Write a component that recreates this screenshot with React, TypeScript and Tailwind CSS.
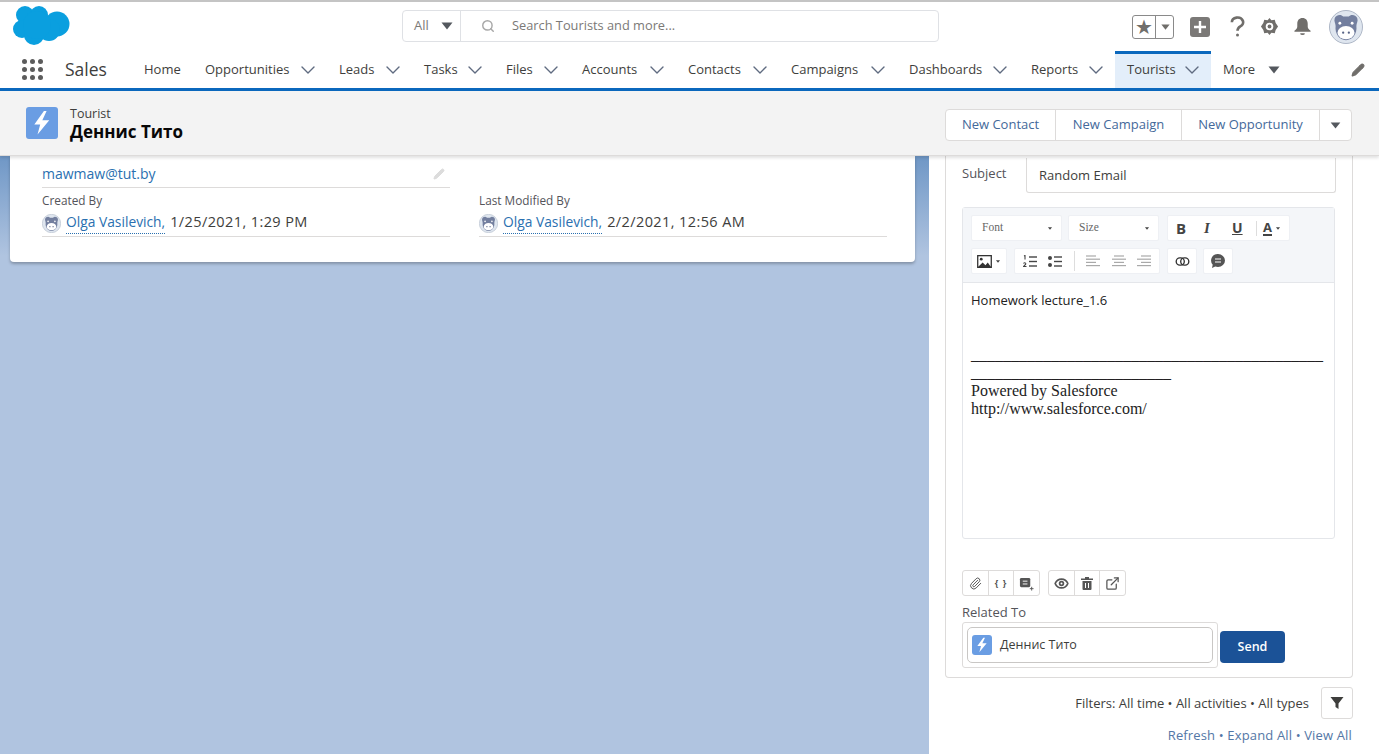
import React from "react";
import { ChevronDown, Pencil, Search, Paperclip, Eye, ExternalLink } from "lucide-react";

const Caret = ({ className = "" }: { className?: string }) => (
  <svg viewBox="0 0 12 8" className={className} fill="currentColor"><path d="M0.5 0.5h11L6 7.5z" /></svg>
);

const Bolt = ({ className = "" }: { className?: string }) => (
  <div className={`flex items-center justify-center rounded-[3px] bg-[#6a9de3] ${className}`}>
    <svg viewBox="0 0 24 24" className="h-[80%] w-[80%]" fill="#fff"><path d="M14 1 5 13.500h5.500L8 23l11-13.500h-6.500L16.500 1z" /></svg>
  </div>
);

const Astro = ({ size }: { size: number }) => (
  <svg viewBox="0 0 36 36" width={size} height={size}>
    <circle cx="18" cy="18" r="17.500" fill="#dfe6ef" stroke="#aab4c4" />
    <path d="M6 9c1-4 7-5 9-2h6c2-3 8-2 9 2 1 3-1 5-1 8 1 8-4 15-11 15S6 25 7 17c0-3-2-5-1-8z" fill="#737f9f" />
    <ellipse cx="18" cy="24" rx="9" ry="7" fill="#fff" />
    <circle cx="11.500" cy="14" r="1.500" fill="#fff" /><circle cx="24.500" cy="14" r="1.500" fill="#fff" />
    <circle cx="15" cy="24" r="1.200" fill="#566285" /><circle cx="21" cy="24" r="1.200" fill="#566285" />
  </svg>
);

const navItems: [string, number][] = [
  ["Opportunities", 134], ["Leads", 85], ["Tasks", 82], ["Files", 76], ["Accounts", 106],
  ["Contacts", 103], ["Campaigns", 118], ["Dashboards", 122], ["Reports", 96],
];

const Chev = () => <ChevronDown className="-my-2 h-[24px] w-[24px] shrink-0 text-[#5f6b80]" strokeWidth={1.400} />;

const NavItem = ({ label, w }: { label: string; w: number }) => (
  <div className="flex h-full items-center justify-between pl-3 pr-[7px]" style={{ width: w }}>
    <span>{label}</span>
    <Chev />
  </div>
);

const ToolBtn = ({ children, className = "" }: { children: React.ReactNode; className?: string }) => (
  <div className={`flex h-[26px] items-center rounded-[2px] border border-[#eef0f4] bg-white text-[#444] ${className}`}>{children}</div>
);

const Align = ({ kind }: { kind: "l" | "c" | "r" }) => {
  const xs = kind === "l" ? [0, 0, 0, 0] : kind === "c" ? [2, 0, 2, 0] : [4, 0, 4, 0];
  return (
    <svg viewBox="0 0 14 12" className="h-[12px] w-[14px]" stroke="#a9a9a9" strokeWidth="1.200">
      {xs.map((x, i) => <line key={i} x1={x} x2={i % 2 ? 14 : x + 10} y1={1 + i * 3.2} y2={1 + i * 3.2} />)}
    </svg>
  );
};

const ListIcon = ({ kind }: { kind: "o" | "u" }) => (
  <svg viewBox="0 0 14 13" className="h-[13px] w-[14px]" fill="#444" stroke="#444">
    <line x1="6" x2="14" y1="2" y2="2" strokeWidth="1.400" /><line x1="6" x2="14" y1="6.500" y2="6.500" strokeWidth="1.400" /><line x1="6" x2="14" y1="11" y2="11" strokeWidth="1.400" />
    {kind === "u" ? (<g stroke="none"><circle cx="2" cy="3" r="2" /><circle cx="2" cy="10" r="2" /></g>) : (<g fill="none" strokeWidth="1.100"><path d="M1 1l1-.5v4" /><path d="M.5 8.500c1-1.500 3-.5 2 1l-2 2h3" /></g>)}
  </svg>
);

export default function App() {
  return (
    <div className="flex h-[754px] w-[1379px] flex-col overflow-hidden bg-white text-[13px] text-[#16325c] [font-family:'Open_Sans','Noto_Sans',sans-serif]">
      <div className="h-[2px] bg-[#c4c4c4]" />
      {/* Global header */}
      <div className="flex h-[49px] items-center pl-[13px] pr-[16px]">
        <svg viewBox="0 0 58 41" className="-mt-[3px] h-[41px] w-[58px]" fill="#0a9fdf">
          <circle cx="12" cy="10" r="9" /><circle cx="26" cy="10" r="9" /><circle cx="44" cy="19" r="12.500" /><circle cx="9" cy="24" r="9" /><circle cx="21" cy="30" r="10" /><circle cx="36" cy="25" r="11" /><circle cx="24" cy="20" r="14" />
        </svg>
        <div className="-mt-[2px] ml-[331px] flex h-[32px] w-[537px] items-center rounded-[4px] border border-[#dfe1e5] text-[13px] text-[#7b7977]">
          <div className="flex h-full w-[58px] items-center border-r border-[#dfe1e5] pl-[11px]">
            <span>All</span><Caret className="ml-[12px] h-[8px] w-[12px] text-[#54585e]" />
          </div>
          <Search className="ml-[20px] h-[14px] w-[14px] text-[#a8a8a8]" strokeWidth={2.500} />
          <span className="ml-[17px] text-[12.800px]">Search Tourists and more...</span>
        </div>
        <div className="ml-auto flex items-center">
          <div className="flex h-[24px] w-[42px] items-center rounded-[3px] border border-[#8a8a8a]">
            <div className="flex h-full w-[23px] items-center justify-center border-r border-[#8a8a8a] text-[20px] leading-none text-[#706e6b]">★</div>
            <Caret className="ml-[5px] h-[6px] w-[9px] text-[#706e6b]" />
          </div>
          <div className="ml-[16px] flex h-[20px] w-[20px] items-center justify-center rounded-[3px] bg-[#7b7977]">
            <svg viewBox="0 0 14 14" className="h-[14px] w-[14px]" stroke="#fff" strokeWidth="2.400"><path d="M7 1v12M1 7h12" /></svg>
          </div>
          <svg viewBox="0 0 16 22" className="ml-[20px] h-[21px] w-[15px]" fill="none" stroke="#706e6b" strokeWidth="2.800"><path d="M2 6.500a6 5 0 1 1 9 4.300c-2 1.200-3 2-3 4.700" /><circle cx="8" cy="20" r="1.600" fill="#706e6b" stroke="none" /></svg>
          <svg viewBox="0 0 20 20" className="ml-[15px] h-[19px] w-[19px]" fill="#706e6b"><path fillRule="evenodd" d="M10 1l2 2.500 3.500-.5 1 3.200L19 10l-2.500 3.800-1 3.200-3.500-.5-2 2.500-2-2.500-3.500.5-1-3.200L1 10l2.500-3.800 1-3.200 3.500.5zM10 6a4 4 0 1 0 0 8 4 4 0 0 0 0-8z" /><circle cx="10" cy="10" r="2" /></svg>
          <svg viewBox="0 0 20 20" className="ml-[14px] h-[19px] w-[19px]" fill="#706e6b"><path d="M10 1c-3.500 0-5.500 2.500-5.500 6v3c0 2-1 3-3 4.500v1h17v-1c-2-1.500-3-2.500-3-4.500V7c0-3.500-2-6-5.500-6z" /><path d="M7.500 17h5a2.500 2 0 0 1-5 0z" /></svg>
          <div className="ml-[17px]"><Astro size={34} /></div>
        </div>
      </div>
      {/* Nav */}
      <div className="flex h-[37px] items-center text-[13px] text-[#3e3e3c]">
        <div className="ml-[22px] grid h-[21px] w-[21px] grid-cols-3 gap-[3px]">
          {Array.from({ length: 9 }).map((_, i) => <div key={i} className="h-[5px] w-[5px] rounded-full bg-[#5c5c5c]" />)}
        </div>
        <div className="ml-[22px] w-[67px] text-[17.500px] text-[#3e3e3c]">Sales</div>
        <div className="flex h-full w-[61px] items-center px-3">Home</div>
        {navItems.map(([l, w]) => <NavItem key={l} label={l} w={w} />)}
        <div className="flex h-full w-[96px] items-center justify-between border-t-[3px] border-[#0b68bd] bg-[#e3eefa] pb-[3px] pl-3 pr-[7px]">
          <span>Tourists</span>
          <Chev />
        </div>
        <div className="flex h-full items-center px-3">
          <span>More</span><Caret className="ml-[13px] h-[8px] w-[12px] text-[#54585e]" />
        </div>
        <Pencil className="ml-auto mr-[14px] h-[14px] w-[14px] fill-[#706e6b] text-[#706e6b]" />
      </div>
      <div className="h-[3px] bg-[#0b68bd]" />
      {/* Page header */}
      <div className="relative z-10 flex h-[65px] shrink-0 items-center border-b border-[#dddbda] bg-[#f3f3f3] pl-[26px] pr-[27px] shadow-[0_2px_3px_rgba(0,0,0,0.12)]">
        <Bolt className="h-[32px] w-[32px]" />
        <div className="ml-[12px] pt-[2px]">
          <div className="text-[12.500px] leading-[15px] text-[#3e3e3c]">Tourist</div>
          <div className="text-[17px] font-bold leading-[21px] text-[#080707]">Деннис Тито</div>
        </div>
        <div className="ml-auto mt-[4px] flex h-[32px] items-center rounded-[4px] border border-[#dddbda] bg-white text-[13px] text-[#44699a]">
          <div className="flex h-full w-[110px] items-center justify-center border-r border-[#dddbda]">New Contact</div>
          <div className="flex h-full w-[126px] items-center justify-center border-r border-[#dddbda]">New Campaign</div>
          <div className="flex h-full w-[138px] items-center justify-center border-r border-[#dddbda]">New Opportunity</div>
          <div className="flex h-full w-[31px] items-center justify-center"><Caret className="h-[7px] w-[11px] text-[#54585e]" /></div>
        </div>
      </div>
      {/* Body */}
      <div className="flex min-h-0 flex-1">
        <div className="flex-1 bg-[linear-gradient(180deg,#6f97c6_0px,#b0c4e0_100px)] pl-[10px] pr-[14px]">
          <div className="h-[106px] rounded-b-[4px] bg-white pl-[32px] pr-[27px] pt-[7px] shadow-[0_2px_3px_rgba(0,0,0,0.25)]">
            <div className="flex h-[25px] w-[408px] items-center justify-between border-b border-[#dddbda] pb-[3px] text-[14px] text-[#2a70b0]">
              <span>mawmaw@tut.by</span>
              <Pencil className="mr-[5px] h-[12px] w-[12px] fill-[#dcdcdc] text-[#dcdcdc]" />
            </div>
            <div className="flex gap-[29px]">
              {[["Created By", "1/25/2021, 1:29 PM"], ["Last Modified By", "2/2/2021, 12:56 AM"]].map(([label, val]) => (
                <div key={label} className="w-[408px]">
                  <div className="mt-[5px] text-[11.800px] leading-[15px] text-[#54545a]">{label}</div>
                  <div className="mt-[2px] flex h-[27px] items-center border-b border-[#dddbda] text-[13.800px] text-[#3e3e3c]">
                    <Astro size={19} />
                    <span className="ml-[5px] border-b border-dotted border-[#2a70b0] text-[#2a70b0]">Olga Vasilevich,</span>
                    <span className="mb-[2px] ml-[5px] text-[14.500px] tracking-[0.4px]">{val}</span>
                  </div>
                </div>
              ))}
            </div>
          </div>
        </div>
        <div className="w-[450px] shrink-0 bg-white pl-[16px] pr-[26px]">
          <div className="h-[522px] rounded-b-[4px] border border-t-0 border-[#dddbda] pl-[16px] pr-[16px]">
            <div className="flex h-[37px] items-start pt-[2px]">
              <div className="w-[64px] pt-[6px] text-[13px] text-[#54545a]">Subject</div>
              <div className="flex h-[35px] w-[310px] items-center rounded-b-[3px] border border-t-0 border-[#dddbda] px-[12px] pt-[1px] text-[13px] text-[#3e3e3c]">Random Email</div>
            </div>
            <div className="mt-[14px] w-[373px] rounded-[3px] border border-[#e4e6ea]">
              <div className="flex h-[75px] flex-col gap-[7px] border-b border-[#e4e6ea] bg-[#f4f6f9] px-[8px] pt-[7px]">
                <div className="flex">
                  <ToolBtn className="w-[91px] justify-between pl-[10px] pr-[8px] text-[11.500px] text-[#666] [font-family:'Liberation_Serif',serif]">Font<Caret className="h-[3px] w-[6px] text-[#444]" /></ToolBtn>
                  <ToolBtn className="ml-[6px] w-[91px] justify-between pl-[10px] pr-[8px] text-[11.500px] text-[#666] [font-family:'Liberation_Serif',serif]">Size<Caret className="h-[3px] w-[6px] text-[#444]" /></ToolBtn>
                  <ToolBtn className="ml-[8px] w-[123px] pl-[8px]">
                    <span className="w-[28px] text-[15px] font-bold leading-none">B</span>
                    <span className="w-[28px] text-[15px] font-bold italic leading-none [font-family:'Liberation_Serif',serif]">I</span>
                    <span className="w-[24px] text-[14px] font-bold leading-none underline">U</span>
                    <span className="flex items-center border-l border-[#ddd] pl-[6px]"><span className="border-b-2 border-[#444] text-[13px] font-bold leading-[13px]">A</span><Caret className="ml-[3px] h-[3px] w-[6px] text-[#444]" /></span>
                  </ToolBtn>
                </div>
                <div className="flex">
                  <ToolBtn className="w-[36px] justify-center gap-[3px]">
                    <svg viewBox="0 0 16 14" className="h-[13px] w-[15px]"><rect x="0.700" y="0.700" width="14.600" height="12.600" fill="#fff" stroke="#333" strokeWidth="1.400" /><circle cx="4.500" cy="4.500" r="1.500" fill="#333" /><path d="M1 13l5-5 3 3 2.500-3L15 13z" fill="#333" /></svg>
                    <Caret className="h-[3px] w-[6px]" />
                  </ToolBtn>
                  <ToolBtn className="ml-[7px] w-[146px] justify-between px-[8px]">
                    <ListIcon kind="o" /><ListIcon kind="u" />
                    <span className="h-[20px] border-l border-[#ddd]" />
                    <Align kind="l" /><Align kind="c" /><Align kind="r" />
                  </ToolBtn>
                  <ToolBtn className="ml-[7px] w-[30px] justify-center">
                    <svg viewBox="0 0 16 10" className="h-[9px] w-[15px]" fill="none" stroke="#333" strokeWidth="1.500"><rect x="1" y="1" width="9" height="8" rx="4" /><rect x="6" y="1" width="9" height="8" rx="4" /></svg>
                  </ToolBtn>
                  <ToolBtn className="ml-[6px] w-[30px] justify-center">
                    <svg viewBox="0 0 16 16" className="h-[16px] w-[16px]"><path d="M8 1a7 6.500 0 0 1 0 13c-1 0-2-.2-2.800-.5L2 15l.7-3.300A6.500 6.500 0 0 1 8 1z" fill="#555" /><path d="M5 6h6M5 9h6" stroke="#fff" strokeWidth="1.200" /></svg>
                  </ToolBtn>
                </div>
              </div>
              <div className="h-[255px] px-[8px] pt-[8px]">
                <div className="text-[13px] leading-[18px] text-[#222]">Homework lecture_1.6</div>
                <div className="mt-[37px] w-[353px] break-all text-[16px] leading-[18px] text-[#222] [font-family:'Liberation_Serif',serif]">
                  _____________________________________________________________________
                  <br />Powered by Salesforce<br />http://www.salesforce.com/
                </div>
              </div>
            </div>
            <div className="mt-[31px] flex gap-[8px] text-[#555]">
              <div className="flex h-[26px] w-[78px] divide-x divide-[#dddbda] rounded-[3px] border border-[#dddbda]">
                <div className="flex flex-1 items-center justify-center"><Paperclip className="h-[13px] w-[13px]" strokeWidth={1.800} /></div>
                <div className="flex flex-1 items-center justify-center text-[9px] font-bold tracking-[1px]">{"{ }"}</div>
                <div className="flex flex-1 items-center justify-center">
                  <svg viewBox="0 0 16 16" className="h-[15px] w-[15px]"><rect x="1" y="2" width="11" height="10" rx="1.500" fill="#555" /><path d="M4 5.500h5M4 8.500h5" stroke="#fff" /><path d="M13.500 11.500v4M11.500 13.500h4" stroke="#555" /></svg>
                </div>
              </div>
              <div className="flex h-[26px] w-[78px] divide-x divide-[#dddbda] rounded-[3px] border border-[#dddbda]">
                <div className="flex flex-1 items-center justify-center"><Eye className="h-[15px] w-[15px]" strokeWidth={2.800} /></div>
                <div className="flex flex-1 items-center justify-center">
                  <svg viewBox="0 0 14 14" className="h-[14px] w-[14px]" fill="#555"><path d="M1 2.500h12v1.500H1zM5 1h4v1.500H5z" /><path fillRule="evenodd" d="M2.500 5h9v8a1 1 0 0 1-1 1h-7a1 1 0 0 1-1-1zM5 7v5h1V7zm3 0v5h1V7z" /></svg>
                </div>
                <div className="flex flex-1 items-center justify-center"><ExternalLink className="h-[15px] w-[15px]" strokeWidth={2} /></div>
              </div>
            </div>
            <div className="mt-[8px] text-[13px] leading-[16px] text-[#54545a]">Related To</div>
            <div className="mt-[2px] flex items-center gap-[2px]">
              <div className="h-[46px] w-[256px] rounded-[3px] border border-[#dddbda] p-[4px]">
                <div className="flex h-[36px] items-center rounded-[5px] border border-[#c9c7c5] pl-[4px] text-[12.500px] text-[#3e3e3c]">
                  <Bolt className="h-[20px] w-[20px]" />
                  <span className="ml-[8px]">Деннис Тито</span>
                </div>
              </div>
              <div className="mt-[4px] flex h-[32px] w-[65px] items-center justify-center rounded-[4px] bg-[#1b5297] text-[12.500px] font-semibold text-white">Send</div>
            </div>
          </div>
          <div className="mt-[9px] flex items-center justify-end text-[13px] text-[#3e3e3c]">
            <span className="pt-[1px]">Filters: All time • All activities • All types</span>
            <div className="ml-[12px] flex h-[32px] w-[32px] items-center justify-center rounded-[3px] border border-[#dddbda]">
              <svg viewBox="0 0 14 14" className="h-[14px] w-[14px]" fill="#3e3e3c"><path d="M0.500 1h13L8.500 7.500V13l-3-2V7.500z" /></svg>
            </div>
          </div>
          <div className="mt-[7px] pr-[1px] text-right text-[13px] tracking-[0.15px] text-[#5377a6]">Refresh • Expand All • View All</div>
        </div>
      </div>
    </div>
  );
}
